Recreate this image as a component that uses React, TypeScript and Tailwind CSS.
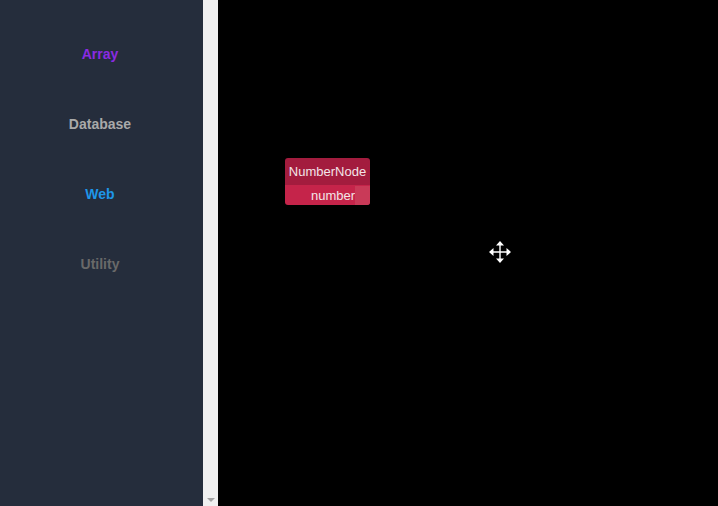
import React from "react";

const categories = [
  { name: "Array", color: "text-[#8a2be2]" },
  { name: "Database", color: "text-[#a9a9a9]" },
  { name: "Web", color: "text-[#1e96e8]" },
  { name: "Utility", color: "text-[#696969]" },
];

function MoveCursor() {
  return (
    <svg width="24" height="24" viewBox="0 0 24 24" className="absolute left-[270px] top-[240px]">
      <path
        d="M12 1 L16 5.5 L12.7 5.5 L12.7 11.3 L18.5 11.3 L18.5 8 L23 12 L18.5 16 L18.5 12.7 L12.7 12.7 L12.7 18.5 L16 18.5 L12 23 L8 18.5 L11.3 18.5 L11.3 12.7 L5.5 12.7 L5.5 16 L1 12 L5.5 8 L5.5 11.3 L11.3 11.3 L11.3 5.5 L8 5.5 Z"
        fill="#ffffff"
      />
    </svg>
  );
}

export default function App() {
  return (
    <div className="flex w-[718px] h-[506px] overflow-hidden font-['Liberation_Sans',Arial,sans-serif]">
      <div className="flex w-[203px] shrink-0 flex-col items-center bg-[#252d3c] pt-[45px] pr-[3px]">
        {categories.map((c) => (
          <div key={c.name} className={`h-[70px] text-[14px] font-bold leading-[18px] ${c.color}`}>
            {c.name}
          </div>
        ))}
      </div>

      {/* scrollbar */}
      <div className="flex w-[15px] shrink-0 flex-col justify-end items-center bg-[#f0f0f0] pb-[4px]">
        <div className="h-0 w-0 border-x-[4px] border-t-[4px] border-x-transparent border-t-[#a3a3a3]" />
      </div>

      <div className="relative flex-1 bg-black">
        <div className="absolute left-[67px] top-[158px] w-[85px] overflow-hidden rounded-[3px] text-[13px] text-[#f3e4e8]">
          <div className="flex h-[27px] items-center justify-center bg-[#a31c3e]">NumberNode</div>
          <div className="flex h-[20px] items-center justify-end bg-[#c5244a]">
            <span className="pt-[2px]">number</span>
            <span className="h-[19px] w-[15px] self-end bg-[#c93a58]" />
          </div>
        </div>
        <MoveCursor />
      </div>
    </div>
  );
}
